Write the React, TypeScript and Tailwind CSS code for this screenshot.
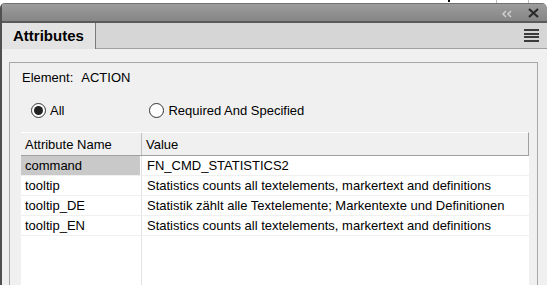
const rows = [
  { name: 'command', value: 'FN_CMD_STATISTICS2', selected: true },
  { name: 'tooltip', value: 'Statistics counts all textelements, markertext and definitions' },
  { name: 'tooltip_DE', value: 'Statistik zählt alle Textelemente; Markentexte und Definitionen' },
  { name: 'tooltip_EN', value: 'Statistics counts all textelements, markertext and definitions' },
]

function Radio({ checked }: { checked?: boolean }) {
  return (
    <span className="w-[15px] h-[15px] rounded-full border border-[#333] bg-white flex items-center justify-center shrink-0">
      {checked && <span className="w-[9px] h-[9px] rounded-full bg-[#222]" />}
    </span>
  )
}

export default function App() {
  return (
    <div className="w-[547px] h-[285px] overflow-hidden bg-white font-['Liberation_Sans',Arial,sans-serif] text-[13px] leading-[15px] text-black flex flex-col">
      {/* bits of whatever sits above the panel */}
      <div className="h-[3px] flex shrink-0">
        <div className="ml-[448px] w-[2px] h-[2px] bg-black" />
        <div className="ml-[46px] w-px bg-[#bdbdbd]" />
        <div className="ml-[31px] w-px bg-[#bdbdbd]" />
      </div>

      <div className="flex-1 flex flex-col border-l-2 border-[#505050] rounded-tl-[5px] rounded-tr-[5px] overflow-hidden">
        <div className="h-[20px] shrink-0 bg-gradient-to-b from-[#9c9c9c] to-[#868686] border-t border-[#707070] border-b-2 border-b-[#5a5a5a] flex items-center justify-end pr-[8px] gap-[16px]">
          <svg width="11" height="8" viewBox="0 0 11 8" className="mt-[3px]">
            <path d="M5 1 L2 4 L5 7 M10 1 L7 4 L10 7" fill="none" stroke="#cfcfcf" strokeWidth="1.5" />
          </svg>
          <svg width="11" height="10" viewBox="0 0 11 10" className="mt-[1px]">
            <path d="M1 1 L10 9 M10 1 L1 9" fill="none" stroke="#2a2a2a" strokeWidth="2.2" />
          </svg>
        </div>

        <div className="h-[26px] shrink-0 flex bg-[#d6d6d6]">
          <div className="w-[94px] bg-[#e3e3e3] border-r border-[#7a7a7a] flex items-center pl-[11px] font-bold text-[15px] leading-[18px]">
            Attributes
          </div>
          <div className="flex-1 border-b border-[#a0a0a0] flex items-center justify-end pr-[8px]">
            <div className="flex flex-col gap-[1.5px] w-[15px]">
              <div className="h-[2px] bg-[#3c3c3c]" />
              <div className="h-[2px] bg-[#3c3c3c]" />
              <div className="h-[2px] bg-[#3c3c3c]" />
              <div className="h-[2px] bg-[#3c3c3c]" />
            </div>
          </div>
        </div>

        <div className="flex-1 bg-[#f0f0f0] pt-[13px] pl-[7px] flex flex-col">
          <div className="w-[529px] flex-1 border border-[#a7a7a7] border-b-0 flex flex-col pl-[11px] pr-[8px]">
            <div className="mt-[7px] pl-[1px]">
              Element:<span className="ml-[8px]">ACTION</span>
            </div>

            <div className="mt-[18px] flex items-center pl-[10px] h-[15px]">
              <Radio checked />
              <span className="ml-[4px]">All</span>
              <span className="ml-[85px]"><Radio /></span>
              <span className="ml-[4px]">Required And Specified</span>
            </div>

            <div className="mt-[14px] flex-1 flex flex-col bg-white">
              <div className="h-[24px] shrink-0 grid grid-cols-[121px_1fr] bg-[#f0f0f0] border-t border-white border-b border-b-[#a0a0a0] border-r border-r-[#a0a0a0]">
                <div className="flex items-center pl-[4px] border-r border-[#c0c0c0]">Attribute Name</div>
                <div className="flex items-center pl-[4px]">Value</div>
              </div>
              {rows.map((r) => (
                <div key={r.name} className="h-[20px] shrink-0 grid grid-cols-[121px_1fr] border-b border-[#f0f0f0]">
                  <div className="border-r border-[#e3e3e3] flex">
                    <div className={`flex-1 flex items-center pl-[4px] ${r.selected ? 'bg-[#c9c9c9] mr-[1px]' : ''}`}>{r.name}</div>
                  </div>
                  <div className="flex items-center pl-[5px] whitespace-nowrap">{r.value}</div>
                </div>
              ))}
              <div className="flex-1 grid grid-cols-[121px_1fr]">
                <div className="border-r border-[#e3e3e3]" />
                <div />
              </div>
            </div>
          </div>
        </div>
      </div>
    </div>
  )
}
